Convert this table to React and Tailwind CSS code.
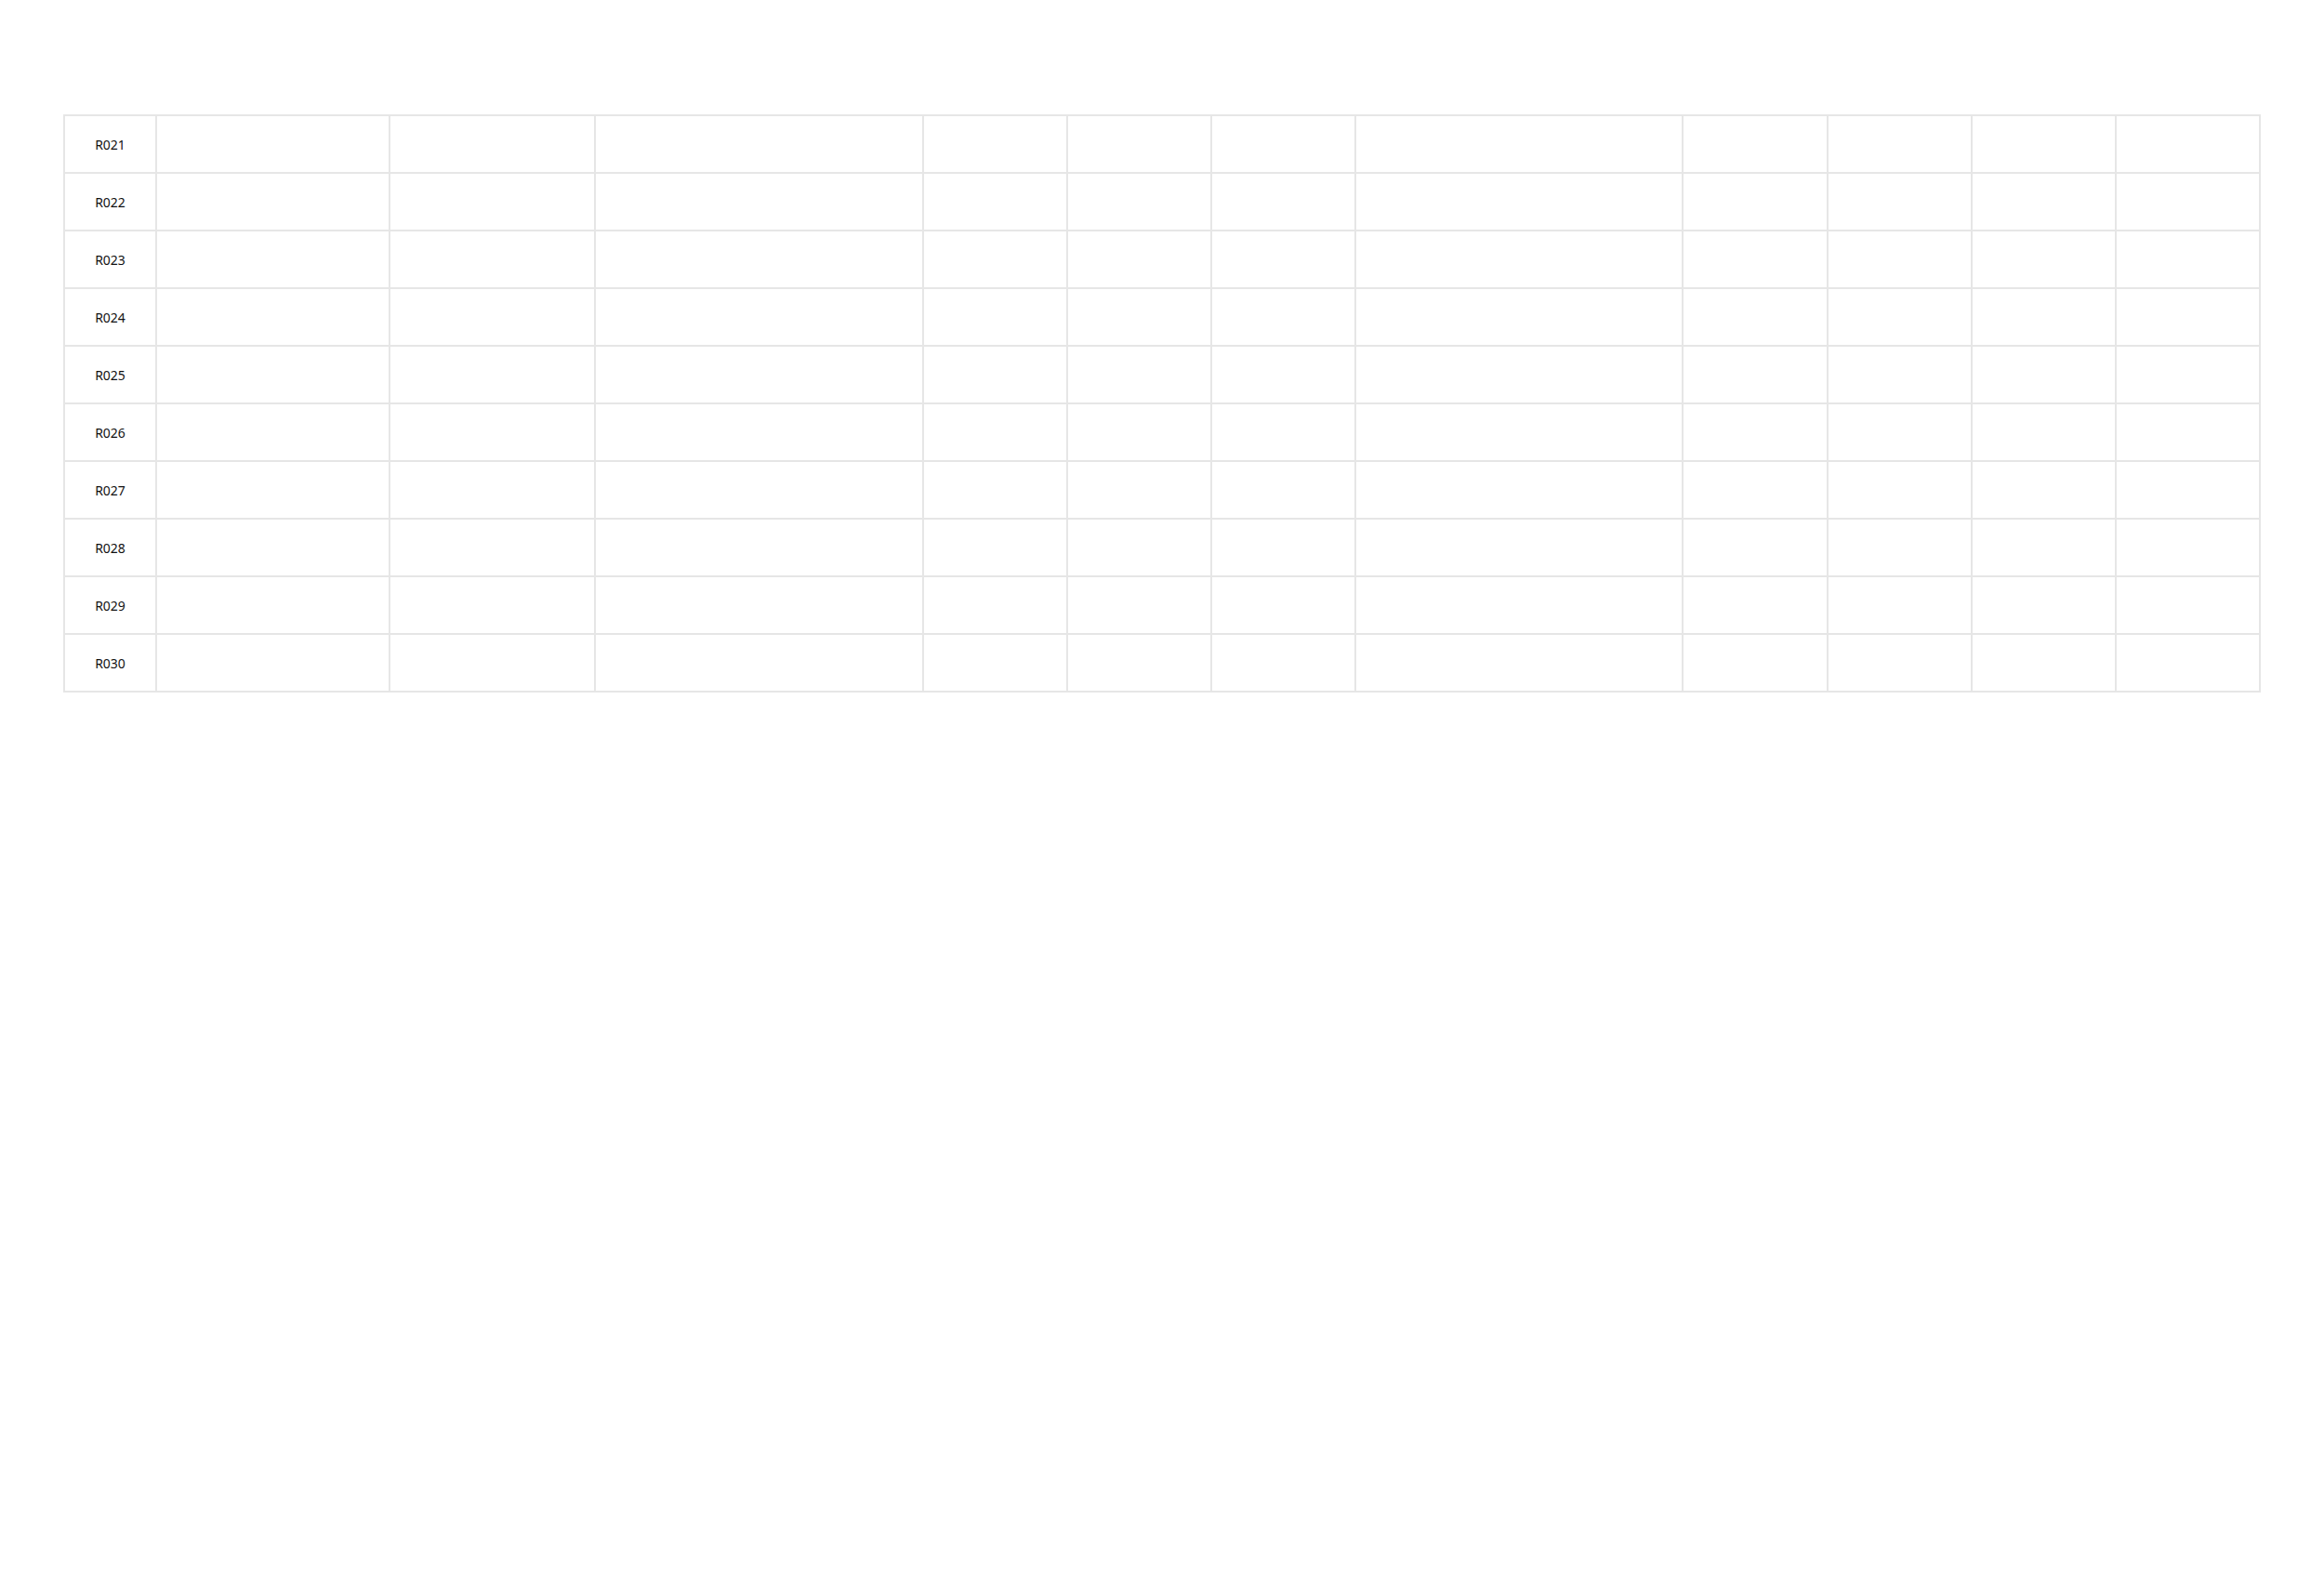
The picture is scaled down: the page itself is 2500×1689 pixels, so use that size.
const cols = [99, 251, 221, 353, 155, 155, 155, 352, 156, 155, 155, 155]
const rows = ['R021', 'R022', 'R023', 'R024', 'R025', 'R026', 'R027', 'R028', 'R029', 'R030']

export default function App() {
  return (
    <div className="min-h-screen bg-white pt-[123px] pl-[68px]" style={{ fontFamily: '"Noto Sans", "Open Sans", sans-serif' }}>
      <table className="table-fixed border-collapse w-[2362px] border-2 border-[#e6e6e6]">
        <colgroup>
          {cols.map((w, i) => (
            <col key={i} style={{ width: w }} />
          ))}
        </colgroup>
        <tbody>
          {rows.map((r) => (
            <tr key={r} className="h-[62px]">
              <td className="border-2 border-[#e6e6e6] text-center text-[14px] text-[#111]">{r}</td>
              {cols.slice(1).map((_, i) => (
                <td key={i} className="border-2 border-[#e6e6e6]" />
              ))}
            </tr>
          ))}
        </tbody>
      </table>
    </div>
  )
}
